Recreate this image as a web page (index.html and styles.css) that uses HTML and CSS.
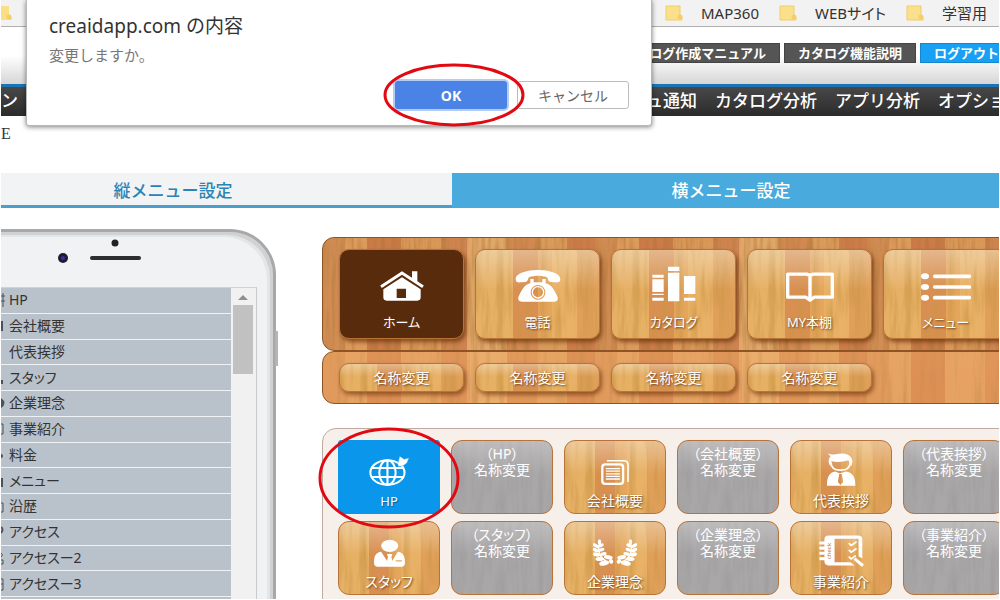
FILE: index.html
```
<!DOCTYPE html>
<html lang="ja">
<head>
    <meta charset="UTF-8">
    <meta name="viewport" content="width=device-width, initial-scale=1.0">
    <title>横メニュー設定</title>
    <link rel="stylesheet" href="styles.css">
</head>
<body>
<div class="page">
    <!-- Bookmarks bar -->
    <div class="bookmarks">
        <svg class="folder folder-cut" viewBox="0 0 18 16" aria-hidden="true"><path d="M0 1h15v10l3 1v3H0z" fill="#fbdf86"/><circle cx="15" cy="12" r="2.5" fill="#f3cf66"/></svg>
        <div class="bookmark-list">
            <a href="#" class="bookmark"><svg class="folder" viewBox="0 0 18 16" aria-hidden="true"><path d="M1 1h14v10l2 1v3H1z" fill="#fbe08c" stroke="#f0cd6c"/><circle cx="15" cy="12" r="2.5" fill="#f3cf66"/></svg>MAP360</a>
            <a href="#" class="bookmark"><svg class="folder" viewBox="0 0 18 16" aria-hidden="true"><path d="M1 1h14v10l2 1v3H1z" fill="#fbe08c" stroke="#f0cd6c"/><circle cx="15" cy="12" r="2.5" fill="#f3cf66"/></svg>WEBサイト</a>
            <a href="#" class="bookmark"><svg class="folder" viewBox="0 0 18 16" aria-hidden="true"><path d="M1 1h14v10l2 1v3H1z" fill="#fbe08c" stroke="#f0cd6c"/><circle cx="15" cy="12" r="2.5" fill="#f3cf66"/></svg>学習用</a>
        </div>
    </div>

    <!-- Header -->
    <header class="header">
        <a href="#" class="header-btn">ログ作成マニュアル</a>
        <a href="#" class="header-btn">カタログ機能説明</a>
        <a href="#" class="header-btn logout">ログアウト</a>
    </header>
    <nav class="global-nav">
        <a href="#">ン</a>
        <div class="nav-right">
            <a href="#">ュ通知</a>
            <a href="#">カタログ分析</a>
            <a href="#">アプリ分析</a>
            <a href="#">オプショ</a>
        </div>
    </nav>
    <h1 class="page-title">E</h1>

    <!-- Tabs -->
    <div class="tabs">
        <button class="tab">縦メニュー設定</button>
        <button class="tab active">横メニュー設定</button>
    </div>

    <main class="main">
        <!-- Phone preview -->
        <section class="phone">
            <svg class="sensors" viewBox="0 0 86 24" aria-hidden="true">
                <circle cx="58" cy="4" r="3.5" fill="#222"/>
                <circle cx="6" cy="19" r="5" fill="#1c1c33"/><circle cx="6" cy="19" r="2" fill="#33339a"/>
                <rect x="33" y="17" width="51" height="4" rx="2" fill="#2c2e30"/>
            </svg>
            <div class="screen">
                <ul class="menu-list">
                    <li><svg viewBox="0 0 4 16"><path d="M0 4h4M2 1v14M0 9h4" stroke="#4a525c"/></svg>HP</li>
                    <li><svg viewBox="0 0 4 16"><path d="M1 3v10" stroke="#4a525c" stroke-width="2"/></svg>会社概要</li>
                    <li><svg viewBox="0 0 4 16"></svg>代表挨拶</li>
                    <li><svg viewBox="0 0 4 16"><path d="M1 10v4" stroke="#4a525c" stroke-width="2"/></svg>スタッフ</li>
                    <li><svg viewBox="0 0 4 16"><path d="M0 3q7 5 0 10z" fill="#4a525c"/></svg>企業理念</li>
                    <li><svg viewBox="0 0 4 16"><path d="M0 3h2v10H0" fill="none" stroke="#4a525c"/></svg>事業紹介</li>
                    <li><svg viewBox="0 0 4 16"><circle cx="0" cy="9" r="2" fill="#4a525c"/></svg>料金</li>
                    <li><svg viewBox="0 0 4 16"><path d="M1 5v9" stroke="#4a525c" stroke-width="2"/></svg>メニュー</li>
                    <li><svg viewBox="0 0 4 16"><path d="M0 5h2v9H0" fill="none" stroke="#4a525c"/></svg>沿歴</li>
                    <li><svg viewBox="0 0 4 16"><path d="M0 3q3 2 0 6" fill="none" stroke="#4a525c" stroke-width="2"/></svg>アクセス</li>
                    <li><svg viewBox="0 0 4 16"><path d="M0 3q3 2 0 4M0 10h2v4H0" fill="none" stroke="#4a525c"/></svg>アクセスー2</li>
                    <li><svg viewBox="0 0 4 16"><path d="M0 3h2v11H0M0 8h2" fill="none" stroke="#4a525c"/></svg>アクセスー3</li>
                    <li></li>
                </ul>
                <div class="scrollbar">
                    <span class="arrow-up"></span>
                    <span class="thumb"></span>
                </div>
            </div>
            <span class="side-key"></span>
        </section>

        <!-- Wooden menus -->
        <section class="editor">
            <div class="wood panel">
                <button class="wood-tile selected">
                    <svg width="44" height="32" viewBox="0 0 132 92" aria-hidden="true">
                        <path d="M3 48L66 7l63 41" fill="none" stroke="#fff" stroke-width="9"/>
                        <path d="M96 2h16v32L96 24z" fill="#fff"/>
                        <path fill-rule="evenodd" d="M10 56L66 20l56 36v24q0 10-10 10H20q-10 0-10-10zM50 54v28h28V54z" fill="#fff"/>
                    </svg>
                    <span>ホーム</span>
                </button>
                <button class="wood-tile">
                    <svg width="46" height="32" viewBox="0 0 138 96" aria-hidden="true" fill="#fff">
                        <path d="M2 28C2 8 40 0 69 0s67 8 67 28c0 8-6 10-16 9l-14-1c-8-2-6-10-10-14-16-6-38-6-54 0-4 4-2 12-10 14l-14 1C8 38 2 36 2 28z"/>
                        <path fill-rule="evenodd" d="M46 27h10v10h26V27h10v13c14 2 24 14 36 42 2 9-4 13-12 13H22c-8 0-14-4-12-13 12-28 22-40 36-42zM69 45a22 22 0 1 0 .1 0z"/>
                        <circle cx="69" cy="67" r="17" fill="none" stroke="#fff" stroke-width="4"/>
                    </svg>
                    <span>電話</span>
                </button>
                <button class="wood-tile">
                    <svg width="44" height="36" viewBox="0 0 132 104" aria-hidden="true" fill="#fff">
                        <path d="M1 24h34v9H1zM1 38h34v38H1zM1 81h34v4H1zM1 93h34v9H1zM48 0h34v13H48zM48 18h34v86H48zM96 28h34v54H96zM96 93h34v9H96z"/>
                    </svg>
                    <span>カタログ</span>
                </button>
                <button class="wood-tile">
                    <svg width="48" height="30" viewBox="0 0 142 86" aria-hidden="true">
                        <path d="M5 5h57l9 4 9-4h57v68H84l-13 9-13-9H5zM71 9v70" fill="none" stroke="#fff" stroke-width="10" stroke-linejoin="round"/>
                    </svg>
                    <span>MY本棚</span>
                </button>
                <button class="wood-tile">
                    <svg width="50" height="30" viewBox="0 0 150 82" aria-hidden="true" fill="#fff">
                        <ellipse cx="12" cy="9" rx="12" ry="9"/><ellipse cx="12" cy="41" rx="12" ry="9"/><ellipse cx="12" cy="73" rx="12" ry="9"/>
                        <path d="M41 9h104M41 41h104M41 73h104" stroke="#fff" stroke-width="11" stroke-linecap="round"/>
                    </svg>
                    <span>メニュー</span>
                </button>
            </div>
            <div class="wood panel rename-panel">
                <button class="rename-btn">名称変更</button>
                <button class="rename-btn">名称変更</button>
                <button class="rename-btn">名称変更</button>
                <button class="rename-btn">名称変更</button>
            </div>

            <div class="parts">
                <button class="part current">
                    <svg width="40" height="30" viewBox="0 0 117 87" aria-hidden="true" fill="none" stroke="#fff" stroke-width="6">
                        <ellipse cx="54" cy="48" rx="50" ry="36"/><ellipse cx="54" cy="48" rx="24" ry="36"/>
                        <path d="M54 12v72M8 35h92M8 61h92"/>
                        <path d="M84 22L90 0l13 9 14-4-6 15-11 8-14 2z" fill="#fff" stroke="#0a96ea" stroke-width="1"/>
                    </svg>
                    <span>HP</span>
                </button>
                <button class="part gray"><span>（HP）</span><span>名称変更</span></button>
                <button class="part">
                    <svg width="28" height="27" viewBox="0 0 86 78" aria-hidden="true" fill="none" stroke="#fff">
                        <rect x="4" y="14" width="64" height="60" rx="9" stroke-width="7"/>
                        <path d="M18 3h52q13 0 13 13v52" stroke-width="5"/>
                        <path d="M15 27h43M15 35h43M15 43h43M15 51h43M15 59h43" stroke-width="4"/>
                    </svg>
                    <span>会社概要</span>
                </button>
                <button class="part gray"><span>（会社概要）</span><span>名称変更</span></button>
                <button class="part">
                    <svg width="30" height="33" viewBox="0 0 87 100" aria-hidden="true">
                        <path d="M5 1q8 5 22 3C52-2 76 4 78 25q0 8-4 15-4-9-8-18-26 8-51 3-4 6-4 15C5 30 4 19 12 10 8 7 6 5 5 1z" fill="#fff"/>
                        <path d="M13 28q0 24 29 24t30-24" fill="none" stroke="#fff" stroke-width="5"/>
                        <path fill-rule="evenodd" d="M26 56l14 6 18-6c20 3 29 14 29 43H1c0-29 8-40 25-43zM38 64l-4 24 8 9 8-9-4-24z" fill="#fff"/>
                    </svg>
                    <span>代表挨拶</span>
                </button>
                <button class="part gray"><span>（代表挨拶）</span><span>名称変更</span></button>

                <button class="part">
                    <svg width="31" height="28" viewBox="0 0 91 80" aria-hidden="true" fill="#fff">
                        <ellipse cx="46" cy="19" rx="25" ry="18"/>
                        <path fill-rule="evenodd" d="M21 36l25 39 24-39c14 2 21 10 21 32q0 12-9 12H9q-9 0-9-12c0-22 7-30 21-32zM64 61v4h18v-4z"/>
                        <path d="M38 43h16l-3 9 3 12-8 12-8-12 3-12z"/>
                    </svg>
                    <span>スタッフ</span>
                </button>
                <button class="part gray"><span>（スタッフ）</span><span>名称変更</span></button>
                <button class="part">
                    <svg width="44" height="28" viewBox="0 0 129 77" aria-hidden="true" fill="#fff">
                        <g id="branch">
                            <path d="M20 8q-14 36 26 60" fill="none" stroke="#fff" stroke-width="5"/>
                            <ellipse cx="19" cy="6" rx="5" ry="8"/>
                            <ellipse cx="8" cy="17" rx="10" ry="5" transform="rotate(35 8 17)"/>
                            <ellipse cx="8" cy="30" rx="10" ry="5" transform="rotate(25 8 30)"/>
                            <ellipse cx="11" cy="43" rx="11" ry="6" transform="rotate(12 11 43)"/>
                            <ellipse cx="19" cy="56" rx="12" ry="6"/>
                            <ellipse cx="33" cy="68" rx="15" ry="7" transform="rotate(-12 33 68)"/>
                            <ellipse cx="24" cy="16" rx="8" ry="5" transform="rotate(-30 24 16)"/>
                            <ellipse cx="25" cy="29" rx="9" ry="5" transform="rotate(-20 25 29)"/>
                            <ellipse cx="31" cy="41" rx="9" ry="5" transform="rotate(-10 31 41)"/>
                            <ellipse cx="45" cy="51" rx="13" ry="6" transform="rotate(10 45 51)"/>
                            <ellipse cx="53" cy="63" rx="7" ry="6" transform="rotate(50 53 63)"/>
                        </g>
                        <use href="#branch" transform="matrix(-1 0 0 1 129 0)"/>
                    </svg>
                    <span>企業理念</span>
                </button>
                <button class="part gray"><span>（企業理念）</span><span>名称変更</span></button>
                <button class="part">
                    <svg width="45" height="32" viewBox="0 0 133 91" aria-hidden="true" fill="none" stroke="#fff">
                        <path fill-rule="evenodd" d="M28 0h88q12 0 12 12v56l-11-7V9H46v70h47l12 9H28q-12 0-12-12V12Q16 0 28 0z" fill="#fff" stroke="none"/>
                        <path d="M5 22h14M5 37h14M5 52h14M5 68h14" stroke-width="9" stroke-linecap="round"/>
                        <path d="M88 22l7 7 16-11M88 42l7 7 16-11M88 62l7 7 14-10" stroke-width="5"/>
                        <path d="M105 68l25 21" stroke-width="9"/>
                        <text transform="translate(36 69) rotate(-90)" class="check-text">check</text>
                    </svg>
                    <span>事業紹介</span>
                </button>
                <button class="part gray"><span>（事業紹介）</span><span>名称変更</span></button>
                <svg class="ring part-ring" viewBox="0 0 142 102" aria-hidden="true"><ellipse cx="71" cy="51" rx="69" ry="49"/></svg>
            </div>
        </section>
    </main>

    <!-- Confirm dialog -->
    <div class="dialog" role="dialog" aria-labelledby="dialogTitle">
        <h2 id="dialogTitle">creaidapp.com の内容</h2>
        <p>変更しますか。</p>
        <div class="dialog-buttons">
            <button class="btn-ok">OK</button>
            <button class="btn-cancel">キャンセル</button>
        </div>
        <svg class="ring ok-ring" viewBox="0 0 142 64" aria-hidden="true"><ellipse cx="71" cy="32" rx="69" ry="30"/></svg>
    </div>
</div>
</body>
</html>
```
FILE: styles.css
```
* {
    box-sizing: border-box;
}

body {
    font-family: "Noto Sans", "Noto Sans CJK JP", sans-serif;
    margin: 0;
    background-color: #fff;
    color: #333;
}

button {
    font-family: inherit;
    margin: 0;
    padding: 0;
    border: none;
    cursor: pointer;
}

a {
    color: inherit;
    text-decoration: none;
}

.page {
    position: relative;
    height: 100vh;
    overflow: hidden;
    border: 1px solid #fff;
    border-top: none;
}

/* Bookmarks bar */
.bookmarks {
    display: flex;
    justify-content: space-between;
    align-items: center;
    height: 27px;
    padding-right: 12px;
    background-color: #f2f2f2;
    border-bottom: 1px solid #b0b0b0;
    font-size: 15px;
}

.bookmark-list {
    display: flex;
    gap: 20px;
}

.bookmark {
    display: flex;
    align-items: center;
    gap: 18px;
    line-height: 20px;
    font-feature-settings: "palt";
}

.folder {
    width: 18px;
    height: 16px;
}

.folder-cut {
    margin-left: -7px;
}

/* Header */
.header {
    display: flex;
    justify-content: flex-end;
    align-items: flex-start;
    gap: 4px;
    height: 57px;
    padding-top: 16px;
    margin-right: -14px;
    background: linear-gradient(#fff 50%, #d6d6d6);
}

.header-btn {
    height: 20px;
    padding: 0 13px;
    border: 1px solid #444;
    background-color: #555;
    color: #fff;
    font-size: 13px;
    font-weight: bold;
    line-height: 18px;
    white-space: nowrap;
}

.header-btn.logout {
    background-color: #18a0f4;
    border-color: #1585cc;
}

.global-nav {
    display: flex;
    justify-content: space-between;
    height: 32px;
    margin-right: -7px;
    border-top: 3px solid #1c74b4;
    background: linear-gradient(#484848, #2b2b2b);
    color: #fff;
    font-size: 17px;
    font-weight: 500;
    line-height: 28px;
    white-space: nowrap;
}

.nav-right {
    display: flex;
    gap: 18px;
}

.page-title {
    margin: 0;
    padding: 9px 0 30px;
    font-family: "Liberation Serif", serif;
    font-size: 16px;
    font-weight: normal;
    line-height: 18px;
}

/* Tabs, both wider than the window */
.tabs {
    display: grid;
    grid-template-columns: 1fr 1fr;
    margin: 0 -11px 0 -107px;
}

.tab {
    height: 35px;
    padding-top: 3px;
    border-bottom: 3px solid #4c9fcc;
    background-color: #f2f3f5;
    color: #2a84b4;
    font-size: 17px;
    font-weight: 500;
    line-height: 29px;
}

.tab.active {
    border-bottom-color: #48aadd;
    background-color: #48aadd;
    color: #fff;
}

.main {
    display: grid;
    grid-template-columns: 275px 1fr;
    column-gap: 46px;
    padding-top: 21px;
}

/* Phone preview */
.phone {
    position: relative;
    height: 420px;
    padding: 7px 16px 0 0;
    border: 3px solid #a8a8a8;
    border-left: none;
    border-radius: 0 46px 0 0;
    background-color: #f1f2f4;
    box-shadow: inset -3px 3px 0 #d0d1d2, inset -6px 5px 0 #e4e5e6;
}

.sensors {
    display: block;
    width: 86px;
    height: 24px;
    margin: 0 0 24px 56px;
}

.screen {
    display: flex;
    border-top: 1px solid #d0d2d4;
    border-right: 1px solid #c8cacc;
    background-color: #f1f1f1;
}

.menu-list {
    flex: 1;
    display: grid;
    grid-template-rows: repeat(12, 1fr) 25px;
    height: 334px;
    margin: 0;
    padding: 0;
    list-style: none;
    background-color: #b9c1ca;
    color: #333;
    font-size: 14px;
    font-feature-settings: "palt";
}

.menu-list li {
    display: flex;
    align-items: center;
    gap: 4px;
    border-bottom: 1px solid #eef2f5;
    line-height: 24px;
}

.menu-list svg {
    width: 4px;
    height: 16px;
}

.scrollbar {
    width: 25px;
    padding: 7px 3px 0 2px;
}

.arrow-up {
    display: block;
    width: 10px;
    margin: 0 auto 5px;
    border: 5px solid transparent;
    border-top: none;
    border-bottom-color: #8f8f8f;
}

.thumb {
    display: block;
    height: 69px;
    background-color: #c1c1c1;
}

.side-key {
    position: absolute;
    top: 99px;
    right: -5px;
    width: 3px;
    height: 35px;
    background-color: #b4b4b4;
}

/* Wooden menus */
.editor {
    min-width: 0;
    padding-top: 8px;
}

.panel {
    display: grid;
    grid-template-columns: repeat(5, 125px);
    gap: 11px;
    padding: 11px 16px;
    margin-right: -20px;
    border: 1px solid #8f5426;
    border-radius: 12px;
}

.wood {
    background:
        url("data:image/svg+xml,%3Csvg xmlns='http://www.w3.org/2000/svg' width='272' height='114'%3E%3Cfilter id='g' x='0' y='0' width='1' height='1'%3E%3CfeTurbulence type='fractalNoise' baseFrequency='.16 .014' numOctaves='3'/%3E%3CfeColorMatrix values='0 0 0 0 .42 0 0 0 0 .18 0 0 0 0 .04 1.8 0 0 0 -.78'/%3E%3C/filter%3E%3Crect width='272' height='114' filter='url(%23g)'/%3E%3C/svg%3E"),
        linear-gradient(90deg, #d28d54 0 22px, #dc9a5c 22px 44px, #cb7b48 44px 78px, #d99758 78px 118px, #cf8450 118px 144px, #dfa768 144px 184px, #d18951 184px 214px, #d99a5a 214px 244px, #cc7c49 244px);
    background-size: 272px 114px;
}

.rename-panel {
    background:
        linear-gradient(rgba(240, 170, 100, 0.3), rgba(240, 160, 90, 0.2)),
        url("data:image/svg+xml,%3Csvg xmlns='http://www.w3.org/2000/svg' width='272' height='114'%3E%3Cfilter id='g' x='0' y='0' width='1' height='1'%3E%3CfeTurbulence type='fractalNoise' baseFrequency='.16 .014' numOctaves='3' seed='2'/%3E%3CfeColorMatrix values='0 0 0 0 .5 0 0 0 0 .22 0 0 0 0 .06 1.6 0 0 0 -.78'/%3E%3C/filter%3E%3Crect width='272' height='114' filter='url(%23g)'/%3E%3C/svg%3E"),
        linear-gradient(90deg, #db955a 0 22px, #e2a163 22px 44px, #d68750 44px 78px, #e3a062 78px 118px, #d98d55 118px 144px, #e8ae6d 144px 184px, #db9156 184px 214px, #e2a262 214px 244px, #d68751 244px);
    background-size: 272px 114px;
}

.wood-tile,
.rename-btn,
.part {
    background:
        linear-gradient(rgba(255, 255, 255, 0.35), rgba(255, 255, 255, 0) 45%),
        url("data:image/svg+xml,%3Csvg xmlns='http://www.w3.org/2000/svg' width='125' height='90'%3E%3Cfilter id='g' x='0' y='0' width='1' height='1'%3E%3CfeTurbulence type='fractalNoise' baseFrequency='.14 .016' numOctaves='3' seed='4'/%3E%3CfeColorMatrix values='0 0 0 0 .6 0 0 0 0 .3 0 0 0 0 .06 1.8 0 0 0 -.72'/%3E%3C/filter%3E%3Crect width='125' height='90' filter='url(%23g)'/%3E%3C/svg%3E"),
        linear-gradient(90deg, #e6b065 0 30%, #d98f52 30% 50%, #e5a65c 50% 62%, #e8b166 62% 82%, #e0a05a 82%);
    border: 1px solid #b87438;
    color: #fff;
    font-feature-settings: "palt";
    text-shadow: 1px 1px 2px #6b3d15;
}

.wood-tile,
.part {
    display: flex;
    flex-direction: column;
    align-items: center;
    justify-content: flex-end;
}

.wood-tile {
    height: 90px;
    padding-bottom: 7px;
    border-radius: 10px;
    box-shadow: 2px 3px 4px rgba(100, 45, 5, 0.7);
    font-size: 13px;
    line-height: 18px;
}

.wood-tile svg {
    margin-bottom: 11px;
}

.wood-tile.selected {
    background: #582b0c;
}

.rename-btn {
    height: 29px;
    border-radius: 10px;
    box-shadow: 2px 3px 4px rgba(100, 45, 5, 0.6);
    font-size: 14px;
    line-height: 24px;
}

.parts {
    position: relative;
    display: grid;
    grid-template-columns: repeat(6, 102px);
    gap: 7px 11px;
    height: 200px;
    margin: 24px -20px 0 0;
    padding: 11px 15px;
    align-content: start;
    border: 1px solid #bfa9a0;
    border-radius: 14px;
    background-color: #f7efea;
}

.part {
    height: 74px;
    padding-bottom: 3px;
    border-radius: 11px;
    font-size: 14px;
    line-height: 18px;
}

.part > svg {
    margin-bottom: 6px;
}

.part.current {
    border-color: #0a96ea;
    border-radius: 3px;
    background: #0a96ea;
    font-size: 13px;
    text-shadow: 1px 1px 1px #06609a;
}

.part.gray {
    justify-content: flex-start;
    padding: 5px 0 0;
    background:
        linear-gradient(rgba(255, 255, 255, 0.25), rgba(255, 255, 255, 0) 45%),
        url("data:image/svg+xml,%3Csvg xmlns='http://www.w3.org/2000/svg' width='102' height='74'%3E%3Cfilter id='g' x='0' y='0' width='1' height='1'%3E%3CfeTurbulence type='fractalNoise' baseFrequency='.15 .02' numOctaves='3' seed='8'/%3E%3CfeColorMatrix values='0 0 0 0 .35 0 0 0 0 .34 0 0 0 0 .35 2 0 0 0 -.7'/%3E%3C/filter%3E%3Crect width='102' height='74' filter='url(%23g)'/%3E%3C/svg%3E"),
        #aaa7a8;
    font-size: 14px;
    line-height: 16px;
    text-shadow: none;
    white-space: nowrap;
}

.check-text {
    fill: #b87438;
    stroke: none;
    font-family: "Liberation Sans", sans-serif;
    font-size: 18px;
    text-shadow: none;
}

/* Red marker ellipses */
.ring {
    position: absolute;
    width: 142px;
    fill: none;
    stroke: #e20a12;
    stroke-width: 3;
    pointer-events: none;
}

.part-ring {
    top: -2px;
    left: -5px;
    height: 102px;
}

.ok-ring {
    top: 63px;
    right: 126px;
    height: 64px;
}

/* Confirm dialog */
.dialog {
    position: absolute;
    top: 0;
    left: 25px;
    width: 626px;
    padding: 14px 22px 16px;
    border: 1px solid #b8b8b8;
    border-top: none;
    border-radius: 0 0 3px 3px;
    background-color: #fff;
    box-shadow: 0 1px 5px rgba(0, 0, 0, 0.5);
}

.dialog h2 {
    margin: 0;
    font-size: 19px;
    font-weight: normal;
    line-height: 25px;
}

.dialog p {
    margin: 6px 0 16px;
    color: #777;
    font-size: 15px;
    line-height: 20px;
}

.dialog-buttons {
    display: flex;
    justify-content: flex-end;
    gap: 10px;
}

.btn-ok,
.btn-cancel {
    width: 112px;
    height: 28px;
    border-radius: 3px;
    font-size: 14px;
}

.btn-ok {
    background-color: #4a82e6;
    box-shadow: 0 0 0 2px #b4cdf6;
    color: #fff;
    font-weight: bold;
}

.btn-cancel {
    border: 1px solid #bcbcbc;
    background-color: #fff;
    color: #666;
}
```
